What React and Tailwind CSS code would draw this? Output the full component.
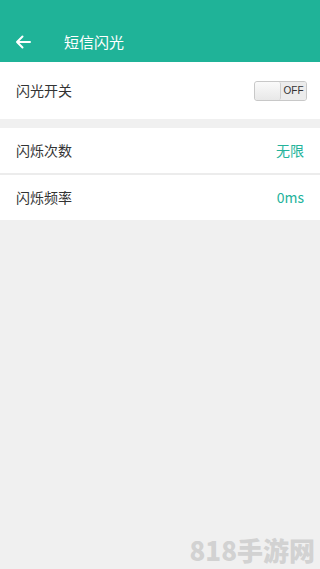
import React from 'react';

const font = { fontFamily: '"Noto Sans CJK SC", "Noto Sans", sans-serif' };

const Row = ({ label, value }) => (
  <div className="flex h-[45px] items-center justify-between bg-white px-4">
    <span className="text-[14px] text-[#333333]">{label}</span>
    <span className="text-[14px] text-[#24b39b]">{value}</span>
  </div>
);

const App = () => {
  return (
    <div className="relative flex min-h-[569px] w-[320px] flex-col bg-[#f0f0f0]" style={font}>
      <div className="flex h-[62px] items-end bg-[#1fb398] pb-[9px]">
        <svg className="ml-[15px] mb-[4px]" width="16" height="14" viewBox="0 0 16 14" fill="none">
          <path d="M15 7H2M7.5 1.5L2 7l5.5 5.5" stroke="#ffffff" strokeWidth="2" strokeLinecap="round" strokeLinejoin="round" />
        </svg>
        <span className="ml-[33px] text-[15px] leading-[22px] text-white">短信闪光</span>
      </div>

      <div className="flex h-[57px] items-center justify-between bg-white px-4">
        <span className="text-[14px] text-[#333333]">闪光开关</span>
        <div className="mr-[-3px] flex h-[20px] w-[53px] overflow-hidden rounded-[3px] border border-[#c8c8c8] bg-[#f2f2f2]">
          <div className="h-full w-[26px] rounded-[2px] border-r border-[#cfcfcf] bg-gradient-to-b from-[#fafafa] to-[#e8e8e8]" />
          <div className="flex flex-1 items-center justify-center bg-[#ececec] text-[10px] text-[#333333]" style={{ fontFamily: '"Liberation Sans", sans-serif' }}>
            OFF
          </div>
        </div>
      </div>

      <div className="h-[9px]" />

      <Row label="闪烁次数" value="无限" />
      <div className="h-[2px] bg-[#ececec]" />
      <Row label="闪烁频率" value="0ms" />

      <div className="absolute bottom-[6px] right-[5px] text-[26px] font-black leading-none text-[#d2d2d2]">
        818手游网
      </div>
    </div>
  );
};

export default App;
